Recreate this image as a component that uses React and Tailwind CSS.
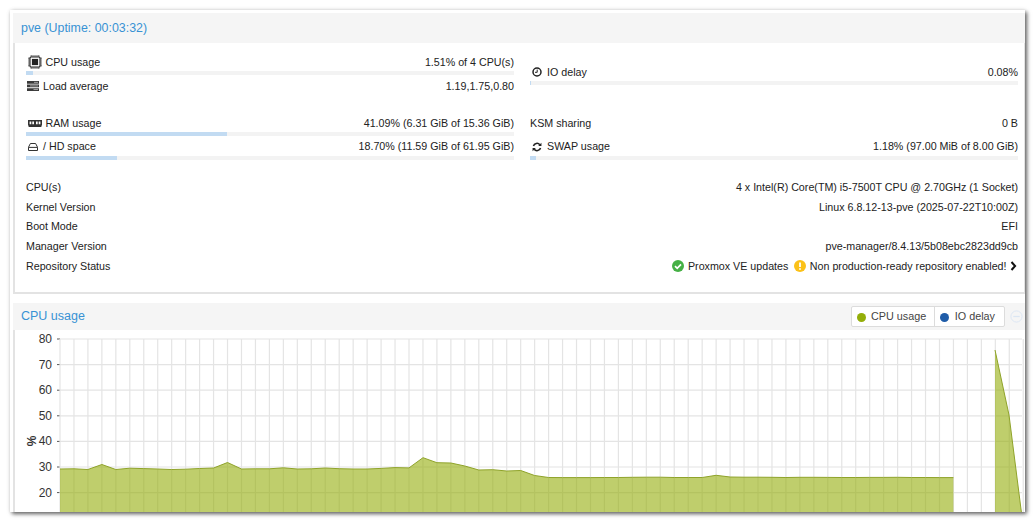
const F = { fontFamily: '"Liberation Sans", Arial, sans-serif' };

function Cpu() {
  return (
    <svg width="14" height="14" viewBox="0 0 14 14" className="shrink-0">
      <rect x="2" y="2" width="10" height="10" rx="1" fill="none" stroke="#222" strokeWidth="1.1" />
      <rect x="3.9" y="3.9" width="6.2" height="6.2" fill="#222" />
      <path d="M3.2 0v2M5 0v2M7 0v2M9 0v2M10.8 0v2M3.2 12v2M5 12v2M7 12v2M9 12v2M10.8 12v2M0 3.2h2M0 5h2M0 7h2M0 9h2M0 10.8h2M12 3.2h2M12 5h2M12 7h2M12 9h2M12 10.8h2" stroke="#333" strokeWidth="0.8" />
    </svg>
  );
}
function Load() {
  return (
    <svg width="12" height="10" viewBox="0 0 12 10" className="shrink-0">
      <path d="M0 0h12v2.7H0zM0 3.6h12v2.7H0zM0 7.2h12v2.7H0z" fill="#3a3a3a" />
      <path d="M7 1.35h4M3 4.95h8M6.5 8.55h4.5" stroke="#bbb" strokeWidth="0.8" />
    </svg>
  );
}
function Ram() {
  return (
    <svg width="14" height="7" viewBox="0 0 14 7" className="shrink-0">
      <path d="M0 0h14v5.6h-.6V7H.6V5.6H0z" fill="#333" />
      <path d="M1.6 1.4h1.7v2.8H1.6zM4.3 1.4H6v2.8H4.3zM8 1.4h1.7v2.8H8zM10.7 1.4h1.7v2.8h-1.7z" fill="#fff" />
    </svg>
  );
}
function Hd() {
  return (
    <svg width="10" height="8" viewBox="0 0 10 8" className="shrink-0">
      <path d="M2.4.5h5.2L9.5 4.2v3.3H.5V4.2zM.7 4.4h8.6" fill="none" stroke="#333" strokeWidth="1" />
    </svg>
  );
}
function Clock() {
  return (
    <svg width="10" height="10" viewBox="0 0 10 10" className="shrink-0">
      <circle cx="5" cy="5" r="4" fill="none" stroke="#222" strokeWidth="1.5" />
      <path d="M5.2 2.6v2.7H3" fill="none" stroke="#222" strokeWidth="1" />
    </svg>
  );
}
function Refresh() {
  return (
    <svg width="10" height="10" viewBox="0 0 11 11" className="shrink-0">
      <path d="M1.6 4.4A4 4 0 0 1 8.6 3" fill="none" stroke="#222" strokeWidth="1.7" />
      <path d="M10.4.8v3.6H6.8z" fill="#222" />
      <path d="M9.4 6.6A4 4 0 0 1 2.4 8" fill="none" stroke="#222" strokeWidth="1.7" />
      <path d="M.6 10.2V6.6h3.6z" fill="#222" />
    </svg>
  );
}

function Stat({ icon, label, value, pct, bar = true, className = "", iconClass = "" }) {
  return (
    <div className={`flex flex-col ${className}`}>
      <div className="flex items-center justify-between h-[18px] text-[10.7px] leading-[13px] text-[#222]">
        <span className="flex items-center">
          {icon && <span className={`flex items-center ${iconClass}`}>{icon}</span>}
          <span>{label}</span>
        </span>
        <span>{value}</span>
      </div>
      {bar && (
        <div className="h-[4px] bg-[#f3f3f3]">
          <div className="h-full bg-[#c2dbf2]" style={{ width: pct }} />
        </div>
      )}
    </div>
  );
}

function Row({ label, children }) {
  return (
    <div className="flex items-center justify-between h-[19.8px] text-[10.7px] text-[#222]">
      <span>{label}</span>
      <span className="flex items-center">{children}</span>
    </div>
  );
}

const ys = [469, 468.8, 469.5, 464.5, 469.5, 468.2, 468.6, 469, 469.5, 469.2, 468.5, 468, 462.5, 469, 468.8, 468.8, 467.8, 469, 468.8, 468, 468.7, 469, 469, 468.4, 467.6, 467.9, 457.7, 462.7, 463, 466, 470, 469.7, 471, 470.5, 475.5, 477.5, 477.6, 477.6, 477.6, 477.5, 477.5, 477.3, 477.2, 477.2, 477.5, 477.5, 477.5, 475.3, 477, 477.2, 477.2, 477.3, 477.5, 477.3, 477.3, 477.4, 477.5, 477.5, 477.4, 477.4, 477.3, 477.5, 477.5, 477.6, 477.6];
const X0 = 60, DX = 13.96, CT = 330;
const px = (i) => X0 + DX * i;
const sy = (y) => y - CT;
const line = ys.map((y, i) => `${px(i).toFixed(1)},${sy(y).toFixed(1)}`).join(" ");
const area = `${X0},183 ${line} ${px(64).toFixed(1)},183`;
const line2 = `995,${sy(350)} 1009,${sy(415)} 1021.5,183`;
const area2 = `995,183 ${line2}`;
const ticks = [80, 70, 60, 50, 40, 30, 20];

function Chart() {
  const v = [];
  for (let i = 0; i < 70; i++) v.push(px(i));
  return (
    <svg width="1010" height="182" viewBox="15 0 1010 182" className="block">
      {ticks.map((t, i) => {
        const y = sy(339 + i * 25.6);
        return (
          <g key={t}>
            <line x1="60" x2="1022" y1={y} y2={y} stroke="#e4e4e4" strokeWidth="1.2" />
            <line x1="57" x2="60" y1={y} y2={y} stroke="#555" strokeWidth="1" />
            <text x="52" y={y + 4} textAnchor="end" fontSize="12" fill="#333" style={F}>{t}</text>
          </g>
        );
      })}
      {v.map((x, i) => (
        <line key={i} x1={x} x2={x} y1={sy(339)} y2="183" stroke="#e4e4e4" strokeWidth="1.2" />
      ))}
      <text transform={`translate(36,${sy(441)}) rotate(-90)`} textAnchor="middle" fontSize="12" fontWeight="700" fill="#333" style={F}>%</text>
      <polygon points={area} fill="#94ae0a" fillOpacity="0.6" />
      <polyline points={line} fill="none" stroke="#8fa32a" strokeWidth="1" />
      <polygon points={area2} fill="#94ae0a" fillOpacity="0.6" />
      <polyline points={line2} fill="none" stroke="#8fa32a" strokeWidth="1" />
    </svg>
  );
}

export default function App() {
  return (
    <div className="w-[1036px] h-[523px] bg-white overflow-hidden pl-[10px] pt-[10px]" style={F}>
      <div className="w-[1015px] h-[502px] bg-white overflow-hidden pl-[3px] pt-[3px] shadow-[2px_2px_4px_rgba(0,0,0,0.6),0_0_4px_rgba(0,0,0,0.1)]">
        <div className="h-[30px] bg-[#f5f5f5] flex items-center pl-[8px] text-[12.4px] text-[#3892d4]">pve (Uptime: 00:03:32)</div>
        <div className="h-[251px] border-l-2 border-b-2 border-r border-[#e3e3e3] pl-[11px] pr-[6px] pt-[10px]">
          <div className="grid grid-cols-2 gap-x-[16px]">
            <div className="flex flex-col gap-[2px]">
              <Stat icon={<Cpu />} iconClass="ml-[2px] mr-[3.5px]" label="CPU usage" value="1.51% of 4 CPU(s)" pct="1.51%" />
              <Stat icon={<Load />} iconClass="ml-[1px] mr-[4px]" label="Load average" value="1.19,1.75,0.80" bar={false} />
            </div>
            <div className="pt-[10px]">
              <Stat icon={<Clock />} iconClass="ml-[2px] mr-[5px]" label="IO delay" value="0.08%" pct="0.2%" />
            </div>
          </div>
          <div className="grid grid-cols-2 gap-x-[16px] mt-[19px]">
            <div className="flex flex-col gap-[1.5px]">
              <Stat icon={<Ram />} iconClass="ml-[2px] mr-[3.5px]" label="RAM usage" value="41.09% (6.31 GiB of 15.36 GiB)" pct="41.09%" />
              <Stat icon={<Hd />} iconClass="ml-[2px] mr-[5px]" label="/ HD space" value="18.70% (11.59 GiB of 61.95 GiB)" pct="18.7%" />
            </div>
            <div className="flex flex-col gap-[1.5px]">
              <Stat label="KSM sharing" value="0 B" pct="0" bar={false} className="mb-[4px]" />
              <Stat icon={<Refresh />} iconClass="ml-[2px] mr-[5px]" label="SWAP usage" value="1.18% (97.00 MiB of 8.00 GiB)" pct="1.18%" />
            </div>
          </div>
          <div className="mt-[17.5px]">
            <Row label="CPU(s)">4 x Intel(R) Core(TM) i5-7500T CPU @ 2.70GHz (1 Socket)</Row>
            <Row label="Kernel Version">Linux 6.8.12-13-pve (2025-07-22T10:00Z)</Row>
            <Row label="Boot Mode">EFI</Row>
            <Row label="Manager Version">pve-manager/8.4.13/5b08ebc2823dd9cb</Row>
            <Row label="Repository Status">
              <svg width="12" height="12" viewBox="0 0 12 12" className="mr-[3.5px]">
                <circle cx="6" cy="6" r="6" fill="#45b045" />
                <path d="M3 6.2l2.2 2.2L9 4.4" fill="none" stroke="#fff" strokeWidth="1.7" />
              </svg>
              <span>Proxmox VE updates</span>
              <svg width="12" height="12" viewBox="0 0 12 12" className="ml-[6px] mr-[3.5px]">
                <circle cx="6" cy="6" r="6" fill="#fbc118" />
                <path d="M6 2.4v4.6M6 8.2v1.6" stroke="#fff" strokeWidth="1.8" />
              </svg>
              <span>Non production-ready repository enabled!</span>
              <svg width="7" height="10" viewBox="0 0 7 10" className="ml-[3.5px] mr-px">
                <path d="M1.5 1l3.6 4-3.6 4" fill="none" stroke="#111" strokeWidth="2" />
              </svg>
            </Row>
          </div>
        </div>
        <div className="h-[9px]" />
        <div className="h-[27px] bg-[#f5f5f5] flex items-center justify-between pl-[8px] pr-[2px]">
          <span className="text-[12.5px] text-[#3892d4]">CPU usage</span>
          <div className="flex items-center">
            <div className="flex h-[21px] bg-white border border-[#dcdcdc] rounded-[2px] text-[10.8px] text-[#444]">
              <span className="flex items-center gap-[5.5px] pl-[5px] pr-[8px] border-r border-[#dcdcdc]">
                <span className="w-[9px] h-[9px] rounded-full bg-[#94ae0a] mt-[1px]" />CPU usage
              </span>
              <span className="flex items-center gap-[5.5px] pl-[5px] pr-[9px]">
                <span className="w-[9px] h-[9px] rounded-full bg-[#1f5ca8] mt-[1px]" />IO delay
              </span>
            </div>
            <svg width="13" height="13" viewBox="0 0 14 14" className="ml-[5px]">
              <circle cx="7" cy="7" r="6" fill="none" stroke="#dbe6f3" strokeWidth="1" />
              <path d="M3.5 7h7" stroke="#dbe6f3" strokeWidth="1.4" />
            </svg>
          </div>
        </div>
        <div className="border-l-2 border-[#e3e3e3]">
          <Chart />
        </div>
      </div>
    </div>
  );
}
